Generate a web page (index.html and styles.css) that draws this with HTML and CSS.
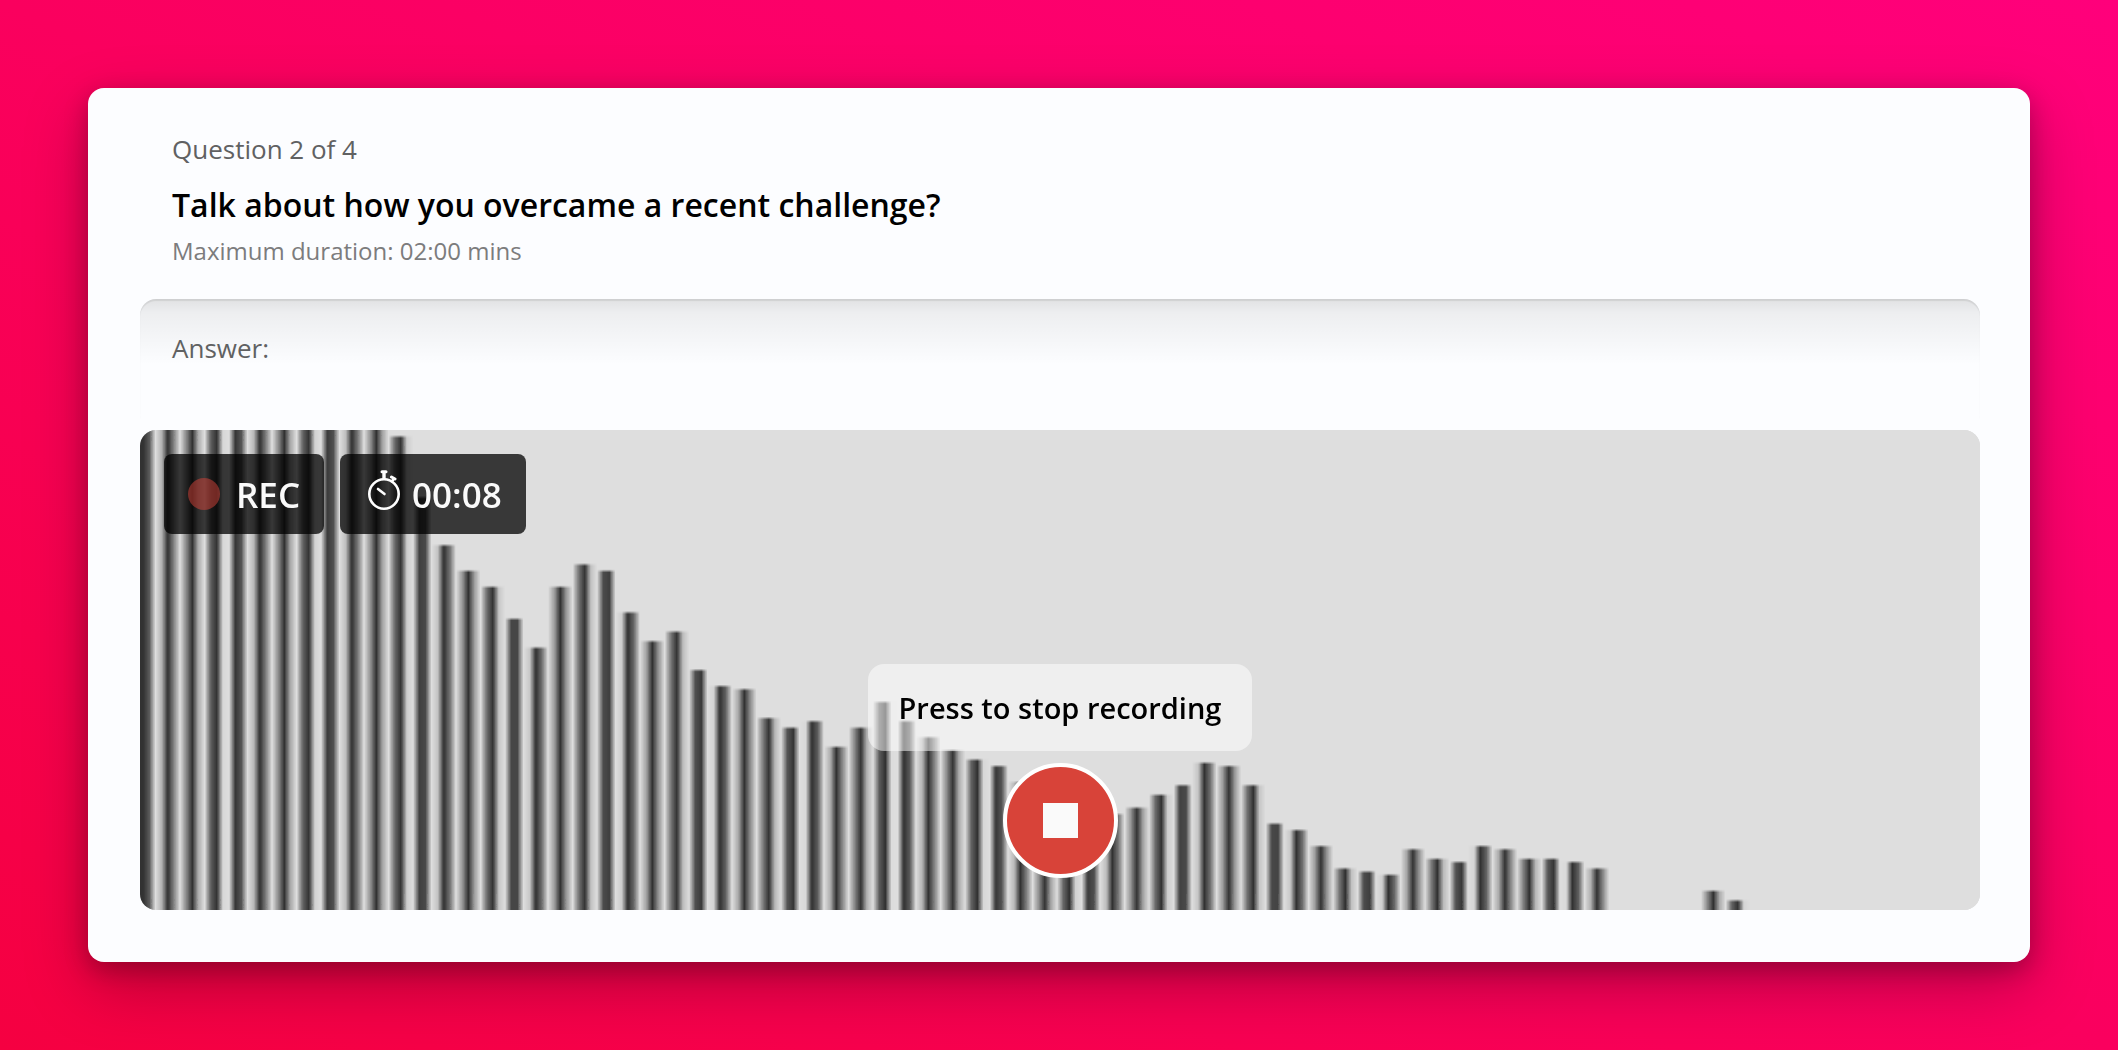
FILE: index.html
```html
<!DOCTYPE html>
<html lang="en">
<head>
  <meta charset="UTF-8">
  <meta name="viewport" content="width=device-width, initial-scale=1.0">
  <title>Interview Recorder</title>
  <link rel="stylesheet" href="styles.css">
</head>
<body>

  <main class="card">
    <header class="question">
      <p class="label">Question 2 of 4</p>
      <h1>Talk about how you overcame a recent challenge?</h1>
      <p class="duration">Maximum duration: 02:00 mins</p>
    </header>

    <section class="answer">
      <h2 class="label">Answer:</h2>
    </section>

    <section class="recorder">
      <canvas id="visualizer" width="300" height="150"></canvas>

      <div class="overlay">
        <div class="badges">
          <div class="badge"><span class="rec-dot"></span>REC</div>
          <div class="badge timer">
            <svg class="stopwatch" viewBox="-2 0 40 48" fill="none" stroke="#fff" stroke-linecap="round">
              <circle cx="18" cy="24" r="14.700" stroke-width="2.600"/>
              <path d="M18 2v7" stroke-width="3.400" stroke-linecap="butt"/>
              <path d="M16 1.700h4" stroke-width="3"/>
              <path d="M26 11.500l1.500-2.500" stroke-width="2.600"/>
              <path d="M25.500 7l3.500 2" stroke-width="3"/>
              <path d="M12 19l6.500 5" stroke-width="2.600"/>
            </svg>
            <span id="time">00:08</span>
          </div>
        </div>

        <div class="controls">
          <div class="hint" id="hint">Press to stop recording</div>
          <button class="stop" id="stopButton" type="button" aria-label="Stop" aria-describedby="hint"><span class="stop-icon"></span></button>
        </div>
      </div>
    </section>
  </main>

  <script src="script.js"></script>
</body>
</html>
```
FILE: styles.css
```css
* {
  box-sizing: border-box;
}

body {
  margin: 0;
  padding: 88px;
  min-height: 100vh;
  font-family: "Open Sans", sans-serif;
  color: #000;
  background: linear-gradient(to top right, #f50041, #ff007b);
}

h1, h2, p {
  margin: 0;
}

.card {
  padding: 39px 50px 52px 52px;
  background: #fcfdff;
  border-radius: 16px;
  box-shadow: 0 24px 64px rgba(0, 0, 0, 0.25), 0 8px 24px rgba(0, 0, 0, 0.24);
}

.question {
  padding: 0 32px 36px;
}

.label {
  font-size: 26px;
  line-height: 44px;
  font-weight: 500;
  color: #606162;
}

.question h1 {
  font-size: 32px;
  line-height: 68px;
  font-weight: 600;
}

.duration {
  font-size: 24px;
  line-height: 24px;
  color: #7c7c7d;
}

.answer {
  height: 131px;
  padding: 27px 32px;
  border-radius: 16px;
  background: linear-gradient(rgba(0, 0, 0, 0.11), rgba(0, 0, 0, 0.06) 14px, transparent 66px) no-repeat;
  box-shadow: inset 0 2px 1px rgba(0, 0, 0, 0.08);
}

.recorder {
  position: relative;
  height: 480px;
  border-radius: 16px;
  background: #dedede;
  overflow: hidden;
}

#visualizer {
  display: block;
  width: 100%;
  height: 100%;
}

.overlay {
  position: absolute;
  inset: 0;
  display: flex;
  flex-direction: column;
  justify-content: space-between;
  padding: 24px 24px 32px;
}

.badges {
  display: flex;
  gap: 16px;
}

.badge {
  display: flex;
  align-items: center;
  gap: 16px;
  height: 80px;
  padding: 0 24px;
  border-radius: 8px;
  background: rgba(0, 0, 0, 0.75);
  color: #fafafa;
  font-size: 35px;
  font-weight: 600;
}

.timer {
  gap: 8px;
}

.rec-dot {
  width: 32px;
  height: 32px;
  border-radius: 50%;
  background: #d84339;
  opacity: 0.5;
}

.stopwatch {
  width: 40px;
  height: 48px;
}

.controls {
  display: flex;
  flex-direction: column;
  align-items: center;
  gap: 12px;
}

.hint {
  padding: 22px 31px 21px;
  border-radius: 16px;
  background: rgba(255, 255, 255, 0.5);
  font-size: 29px;
  line-height: 44px;
  font-weight: 600;
}

.stop {
  display: flex;
  align-items: center;
  justify-content: center;
  width: 115px;
  height: 115px;
  padding: 0;
  border: 4px solid #fff;
  border-radius: 50%;
  background: #d84339;
  cursor: pointer;
}

.stop-icon {
  width: 35px;
  height: 35px;
  background: #fafafa;
}
```
FILE: script.js
```js
var canvas = document.getElementById('visualizer');
var ctx = canvas.getContext('2d');

// bar heights, lowest frequency first
var levels = [
  150, 150, 150, 150, 150, 150, 150, 150, 150, 150, 150, 148, 129, 114,
  106, 101, 91, 82, 101, 108, 106, 93, 84, 87, 75, 70, 69, 60, 57, 59,
  51, 57, 65, 59, 54, 50, 47, 45, 40, 36, 33, 31, 30, 32, 36, 39, 46,
  45, 39, 27, 25, 20, 13, 12, 11, 19, 16, 15, 20, 19, 16, 16, 15, 13,
  0, 0, 0, 0, 6, 3
];

var barWidth = (canvas.width / 256) * 1.5;
var x = 0;

ctx.fillStyle = '#dedede';
ctx.fillRect(0, 0, canvas.width, canvas.height);

ctx.fillStyle = 'rgb(50, 50, 50)';
for (var i = 0; i < levels.length; i++) {
  ctx.fillRect(x, canvas.height - levels[i], barWidth, levels[i]);
  x += barWidth + 2;
}
```
